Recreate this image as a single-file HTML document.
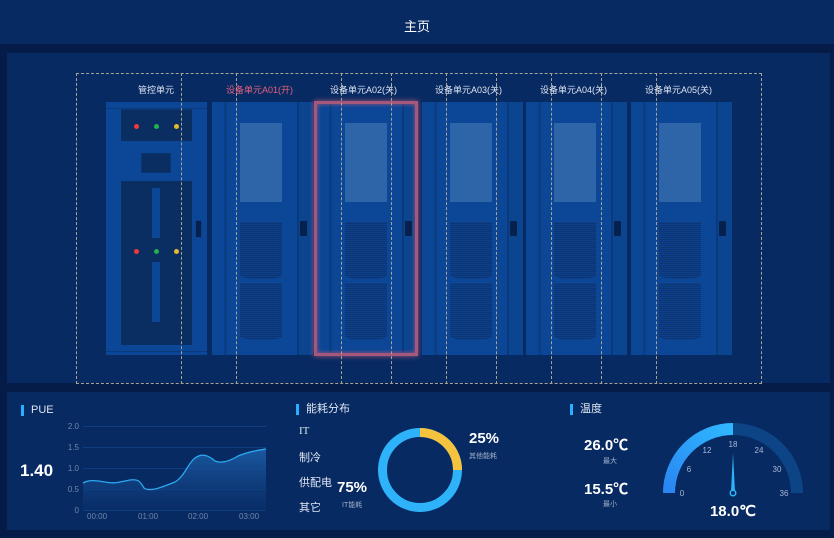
<!DOCTYPE html>
<html><head><meta charset="utf-8"><style>
*{margin:0;padding:0;box-sizing:border-box}
body{width:834px;height:538px;background:#061c48;position:relative;overflow:hidden;font-family:"Liberation Sans","Noto Sans CJK SC",sans-serif;color:#dfe6f2}
.a{position:absolute}
.t{position:absolute;white-space:nowrap}
.cab{position:absolute;top:102px;width:101px;height:253px;background:#0c4797}
.cab .l{position:absolute;left:12px;top:0;width:3px;height:253px;background:#0a3f85}
.cab .r{position:absolute;left:85px;top:0;width:16px;height:253px;background:#0b448f;border-left:2px solid #0a3a7c}
.cab .w{position:absolute;left:28px;top:21px;width:42px;height:79px;background:#2e65a8}
.cab .v{position:absolute;left:28px;width:42px;height:57px;border-radius:0 0 40% 40%/0 0 4px 4px;background:repeating-linear-gradient(#0f3f86 0 1px,#0a3677 1px 2px)}
.cab .h{position:absolute;left:88px;top:119px;width:7px;height:15px;background:#06214d;border-radius:1px}
.dl{position:absolute;top:73px;height:311px;border-left:1px dashed #a9a393}
.ttl{position:absolute;font-size:11px;color:#dfe6f2;padding-left:7px;border-left:3px solid #2ab0ff;line-height:11px}
</style></head><body>
<div class="a" style="left:0;top:0;width:834px;height:44px;background:#072a62"></div>
<div class="t" style="left:0;width:834px;top:16px;text-align:center;font-size:13px;color:#fff">主页</div>
<div class="a" style="left:7px;top:53px;width:823px;height:330px;background:#072a62"></div>
<div class="a" style="left:7px;top:392px;width:823px;height:138px;background:#072a62"></div>

<!-- control rack -->
<div class="a" style="left:106px;top:102px;width:101px;height:253px;background:#0c4797"></div>
<div class="a" style="left:121px;top:110px;width:71px;height:235px;background:#0a2d62"></div>
<div class="a" style="left:121px;top:141px;width:71px;height:40px;background:#0c4797"></div>
<div class="a" style="left:141px;top:153px;width:30px;height:20px;background:#0a2d62;border:1px solid #0a3570"></div>
<div class="a" style="left:152px;top:188px;width:8px;height:50px;background:#0c4797"></div>
<div class="a" style="left:152px;top:262px;width:8px;height:60px;background:#0c4797"></div>
<div class="a" style="left:121px;top:108px;width:71px;height:2px;background:#0a3a7c"></div>
<div class="a" style="left:121px;top:345px;width:71px;height:6px;background:#0c4797"></div>
<div class="a" style="left:106px;top:108px;width:101px;height:1px;background:#0a3a7c"></div>
<div class="a" style="left:106px;top:351px;width:101px;height:1px;background:#0a3a7c"></div>
<div class="a" style="left:195px;top:220px;width:7px;height:18px;background:#06214d;border:1px solid #0f3f86"></div>
<div class="a" style="left:134px;top:124px;width:5px;height:5px;border-radius:50%;background:#f03a3a"></div>
<div class="a" style="left:154px;top:124px;width:5px;height:5px;border-radius:50%;background:#23b14a"></div>
<div class="a" style="left:174px;top:124px;width:5px;height:5px;border-radius:50%;background:#e7b82c"></div>
<div class="a" style="left:134px;top:249px;width:5px;height:5px;border-radius:50%;background:#f03a3a"></div>
<div class="a" style="left:154px;top:249px;width:5px;height:5px;border-radius:50%;background:#23b14a"></div>
<div class="a" style="left:174px;top:249px;width:5px;height:5px;border-radius:50%;background:#e7b82c"></div>

<!-- cabinets -->
<div class="cab" style="left:212px"><div class="l"></div><div class="r"></div><div class="w"></div><div class="v" style="top:120px"></div><div class="v" style="top:181px"></div><div class="h"></div></div>
<div class="cab" style="left:317px"><div class="l"></div><div class="r"></div><div class="w"></div><div class="v" style="top:120px"></div><div class="v" style="top:181px"></div><div class="h"></div></div>
<div class="cab" style="left:422px"><div class="l"></div><div class="r"></div><div class="w"></div><div class="v" style="top:120px"></div><div class="v" style="top:181px"></div><div class="h"></div></div>
<div class="cab" style="left:526px"><div class="l"></div><div class="r"></div><div class="w"></div><div class="v" style="top:120px"></div><div class="v" style="top:181px"></div><div class="h"></div></div>
<div class="cab" style="left:631px"><div class="l"></div><div class="r"></div><div class="w"></div><div class="v" style="top:120px"></div><div class="v" style="top:181px"></div><div class="h"></div></div>
<div class="a" style="left:314px;top:101px;width:104px;height:255px;border:3px solid #a6577c;box-shadow:0 0 5px #a6577c,inset 0 0 4px #a6577c"></div>

<!-- dashed -->
<div class="a" style="left:76px;top:73px;width:686px;height:311px;border:1px dashed #a9a393"></div>
<div class="dl" style="left:181px"></div><div class="dl" style="left:236px"></div><div class="dl" style="left:341px"></div><div class="dl" style="left:391px"></div><div class="dl" style="left:446px"></div><div class="dl" style="left:496px"></div><div class="dl" style="left:551px"></div><div class="dl" style="left:601px"></div><div class="dl" style="left:656px"></div>

<div class="t" style="left:138px;top:83px;font-size:9px">管控单元</div>
<div class="t" style="left:226px;top:83px;font-size:9px;color:#e8607a">设备单元A01(开)</div>
<div class="t" style="left:330px;top:83px;font-size:9px">设备单元A02(关)</div>
<div class="t" style="left:435px;top:83px;font-size:9px">设备单元A03(关)</div>
<div class="t" style="left:540px;top:83px;font-size:9px">设备单元A04(关)</div>
<div class="t" style="left:645px;top:83px;font-size:9px">设备单元A05(关)</div>

<!-- PUE -->
<div class="ttl" style="left:21px;top:405px">PUE</div>
<div class="t" style="left:20px;top:461px;font-size:17px;font-weight:bold;color:#fff">1.40</div>
<svg class="a" style="left:60px;top:418px" width="215" height="110">
<defs><linearGradient id="g" x1="0" y1="0" x2="0" y2="1"><stop offset="0" stop-color="#1c5ea8" stop-opacity=".9"/><stop offset="1" stop-color="#0b2f6a" stop-opacity=".6"/></linearGradient></defs>
<g stroke="#0e3f80" stroke-width="1"><line x1="23" y1="8.5" x2="206" y2="8.5"/><line x1="23" y1="29.5" x2="206" y2="29.5"/><line x1="23" y1="50.5" x2="206" y2="50.5"/><line x1="23" y1="71.5" x2="206" y2="71.5"/><line x1="23" y1="92.5" x2="206" y2="92.5"/></g>
<path d="M23 65 C30 61 38 63 45 64 C55 66 60 64 70 62 C78 61 80 63 84 70 C90 74 100 70 115 64 C125 58 128 45 135 40 C142 35 148 37 155 43 C162 46 170 43 178 38 C190 33 200 32 206 31 L206 92 L23 92Z" fill="url(#g)"/>
<path d="M23 65 C30 61 38 63 45 64 C55 66 60 64 70 62 C78 61 80 63 84 70 C90 74 100 70 115 64 C125 58 128 45 135 40 C142 35 148 37 155 43 C162 46 170 43 178 38 C190 33 200 32 206 31" fill="none" stroke="#2ba8f0" stroke-width="1.3"/>
<g font-size="8" fill="#6f86aa" text-anchor="end" font-family="Liberation Sans"><text x="19" y="11">2.0</text><text x="19" y="32">1.5</text><text x="19" y="53">1.0</text><text x="19" y="74">0.5</text><text x="19" y="95">0</text></g>
<g font-size="8" fill="#6f86aa" font-family="Liberation Sans"><text x="27" y="101">00:00</text><text x="78" y="101">01:00</text><text x="128" y="101">02:00</text><text x="179" y="101">03:00</text></g>
</svg>

<!-- energy -->
<div class="ttl" style="left:296px;top:404px">能耗分布</div>
<div class="t" style="left:299px;top:425px;font-size:11px;font-family:'Liberation Serif','Noto Serif CJK SC',serif">IT</div>
<div class="t" style="left:299px;top:449px;font-size:11px">制冷</div>
<div class="t" style="left:299px;top:474px;font-size:11px">供配电</div>
<div class="t" style="left:299px;top:499px;font-size:11px">其它</div>
<div class="t" style="left:337px;top:479px;font-size:15px;font-weight:bold;color:#fff">75%</div>
<div class="t" style="left:342px;top:500px;font-size:7px;color:#9fb0cc">IT能耗</div>
<svg class="a" style="left:376px;top:426px" width="90" height="90"><circle cx="44" cy="44" r="37.5" fill="none" stroke="#2eb3fb" stroke-width="9"/><path d="M44 6.5 A37.5 37.5 0 0 1 81.5 44" fill="none" stroke="#f6c33e" stroke-width="9"/></svg>
<div class="t" style="left:469px;top:430px;font-size:15px;font-weight:bold;color:#fff">25%</div>
<div class="t" style="left:469px;top:451px;font-size:7px;color:#9fb0cc">其他能耗</div>

<!-- temperature -->
<div class="ttl" style="left:570px;top:404px">温度</div>
<div class="t" style="left:584px;top:434px;font-size:15px;font-weight:bold;color:#fff">26.0℃</div>
<div class="t" style="left:603px;top:456px;font-size:7px;color:#9fb0cc">最大</div>
<div class="t" style="left:584px;top:478px;font-size:15px;font-weight:bold;color:#fff">15.5℃</div>
<div class="t" style="left:603px;top:499px;font-size:7px;color:#9fb0cc">最小</div>
<svg class="a" style="left:650px;top:415px" width="170" height="110">
<defs><linearGradient id="gg" x1="0" y1="1" x2="1" y2="0"><stop offset="0" stop-color="#2a86f2"/><stop offset="1" stop-color="#2fb8ff"/></linearGradient></defs>
<path d="M19 78 A64 64 0 0 1 147 78" fill="none" stroke="#0d4486" stroke-width="12"/>
<path d="M19 78 A64 64 0 0 1 83 14" fill="none" stroke="url(#gg)" stroke-width="12"/>
<g font-size="8" fill="#a9bad6" text-anchor="middle" font-family="Liberation Sans"><text x="32" y="81">0</text><text x="39" y="57">6</text><text x="57" y="38">12</text><text x="83" y="32">18</text><text x="109" y="38">24</text><text x="127" y="57">30</text><text x="134" y="81">36</text></g>
<path d="M83 38 L85 77 L81 77Z" fill="#2eb3fb"/>
<circle cx="83" cy="78" r="2.8" fill="#0b2f6a" stroke="#2eb3fb" stroke-width="1.5"/>
<text x="83" y="101" font-size="15" font-weight="bold" fill="#fff" text-anchor="middle" font-family="Liberation Sans">18.0℃</text>
</svg>
</body></html>
